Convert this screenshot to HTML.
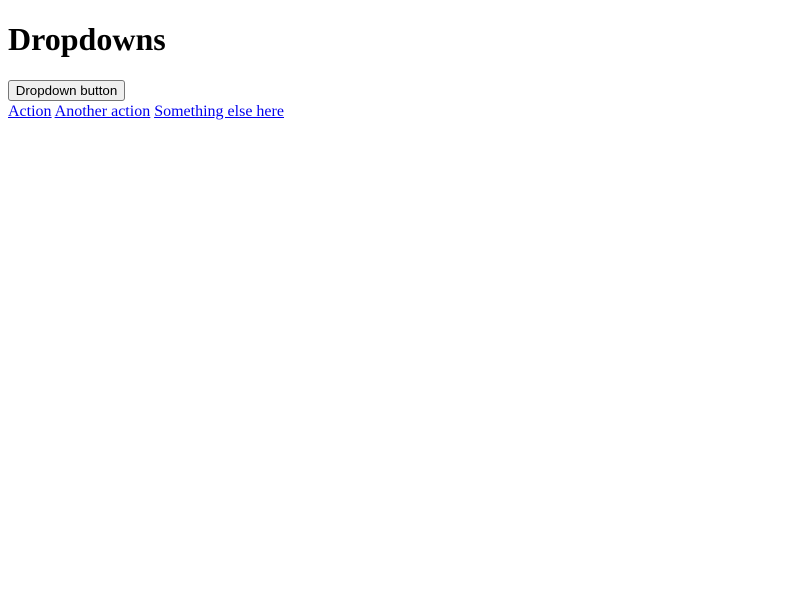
<!DOCTYPE html>
<html><head><style>
body{margin:8px;font-family:"Liberation Serif",serif;font-size:16px;background:#fff;color:#000}
h1{font-size:32px;margin:21.44px 0;font-weight:bold}
button{font-family:"Liberation Sans",sans-serif;font-size:13.33px;padding:1px 6px;border:1px solid #767676;border-radius:3px;background:#efefef;height:21px;width:117px;margin:0;color:#000;display:block}
a{color:#0000ee;text-decoration:underline}
.m{margin-top:1px;line-height:19px}
</style></head><body>
<h1>Dropdowns</h1>
<div><button>Dropdown button</button>
<div class="m"><a href="#"><u>Action</u></a> <a href="#"><u>Another action</u></a> <a href="#"><u>Something else here</u></a></div></div>
</body></html>
